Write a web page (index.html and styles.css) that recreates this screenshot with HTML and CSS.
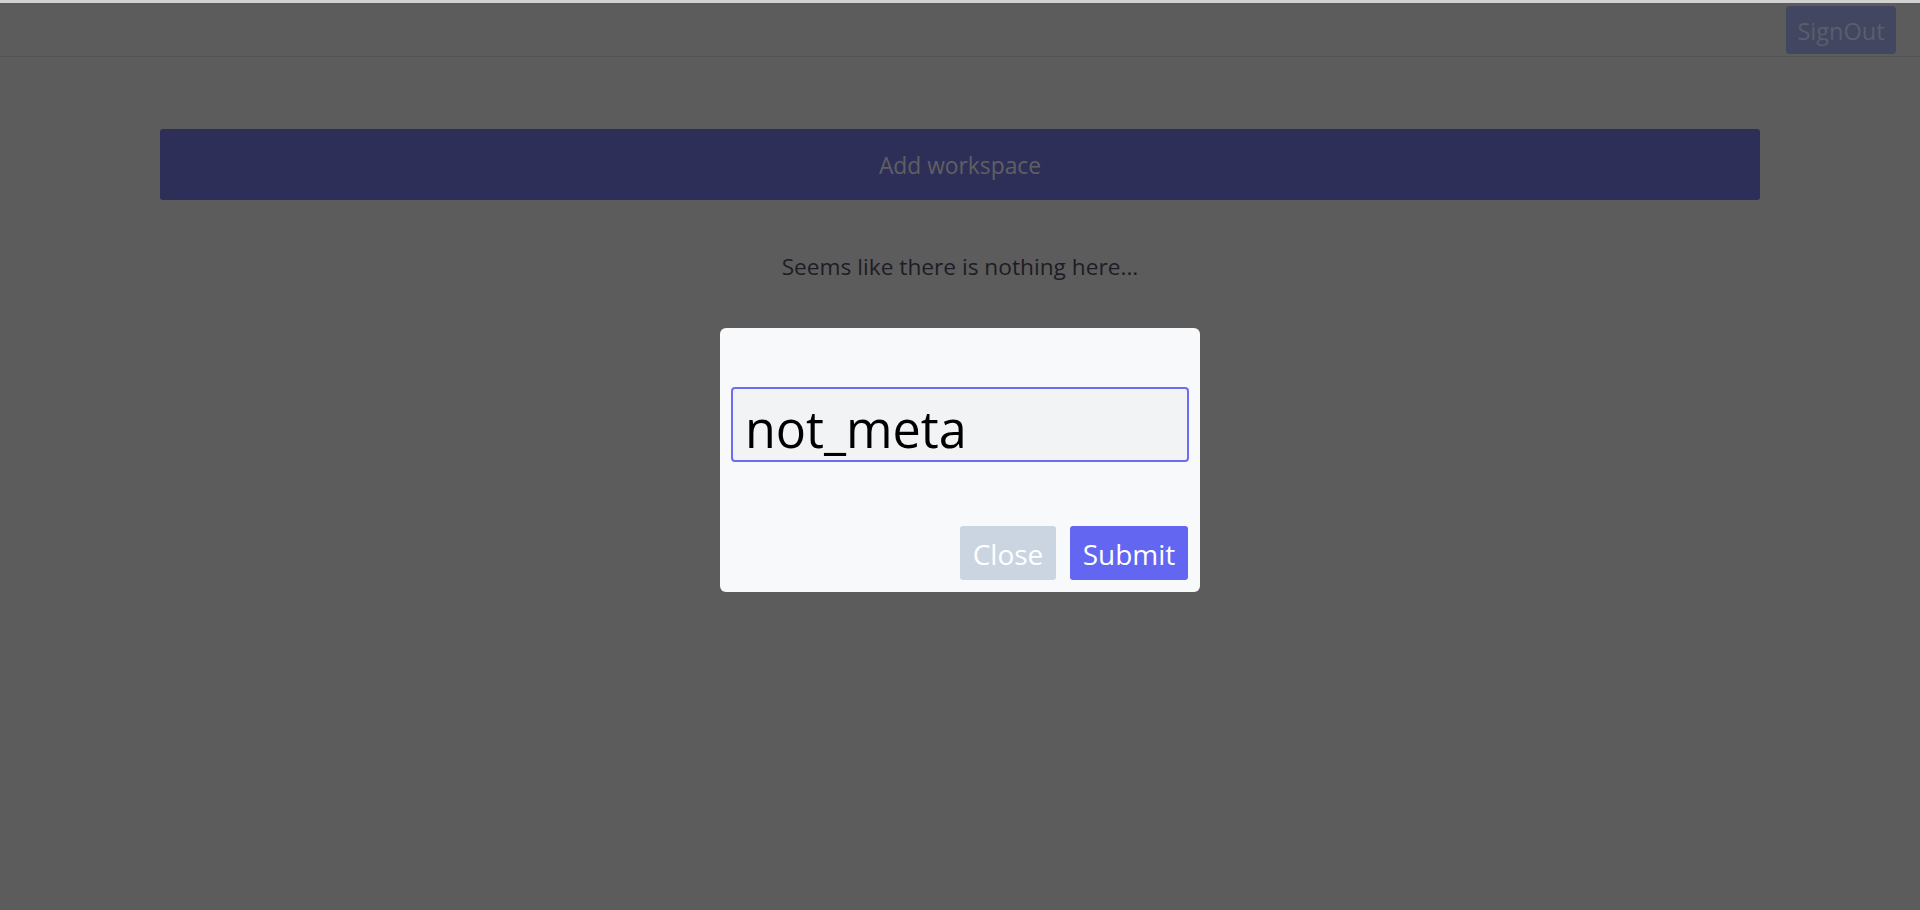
FILE: index.html
```html
<!DOCTYPE html>
<html lang="en">
<head>
<meta charset="utf-8">
<title>Workspaces</title>
<link rel="stylesheet" href="styles.css">
</head>
<body>
<header class="topbar">
  <button class="signout">SignOut</button>
</header>
<main class="content">
  <button class="add-ws">Add workspace</button>
  <p class="empty">Seems like there is nothing here...</p>
</main>
<div class="overlay">
  <div class="modal">
    <input class="ws-input" type="text" value="not_meta">
    <div class="actions">
      <button class="btn btn-close">Close</button>
      <button class="btn btn-submit">Submit</button>
    </div>
  </div>
</div>
</body>
</html>
```

FILE: styles.css
```css
* { box-sizing: border-box; }
html, body { height: 100%; }
body {
  margin: 0;
  background: #5c5c5c;
  border-top: 3px solid #d2d2d2;
  font-family: "Open Sans", "Noto Sans", sans-serif;
  overflow: hidden;
}
.topbar {
  height: 54px;
  border-bottom: 1px solid #545454;
  display: flex;
  justify-content: flex-end;
  align-items: flex-start;
  padding: 3px 24px 0 0;
}
.signout {
  width: 110px;
  height: 48px;
  border: none;
  border-radius: 4px;
  background: #424660;
  color: #5b5d6d;
  font-family: inherit;
  font-size: 23.5px;
  padding: 2px 0 0;
}
.content {
  padding: 72px 160px 0;
  display: flex;
  flex-direction: column;
  align-items: center;
}
.add-ws {
  width: 100%;
  height: 71px;
  border: none;
  border-radius: 3px;
  background: #2e2f59;
  color: #5f6062;
  font-family: inherit;
  font-size: 22.8px;
  padding: 2px 0 0;
}
.empty {
  margin: 52px 0 0;
  color: #1d1d25;
  font-size: 22.7px;
  line-height: 30px;
}
.overlay {
  position: fixed;
  inset: 0;
  display: flex;
  justify-content: center;
  align-items: flex-start;
  padding-top: 328px;
}
.modal {
  width: 480px;
  height: 264px;
  background: #f8f9fb;
  border-radius: 6px;
  padding: 59px 12px 12px 11px;
  display: flex;
  flex-direction: column;
}
.ws-input {
  width: 458px;
  height: 75px;
  border: 2px solid #6b6ef5;
  border-radius: 4px;
  background: #f2f3f5;
  color: #000;
  font-family: inherit;
  font-size: 50.3px;
  padding: 8px 12px 0;
  outline: none;
}
.actions {
  margin-top: auto;
  display: flex;
  justify-content: flex-end;
  gap: 14px;
}
.btn {
  height: 54px;
  border: none;
  border-radius: 3px;
  color: #fff;
  font-family: inherit;
  font-size: 28px;
  padding: 2px 0 0;
}
.btn-close { width: 96px; background: #cbd5e1; }
.btn-submit { width: 118px; background: #6366f1; }
```
